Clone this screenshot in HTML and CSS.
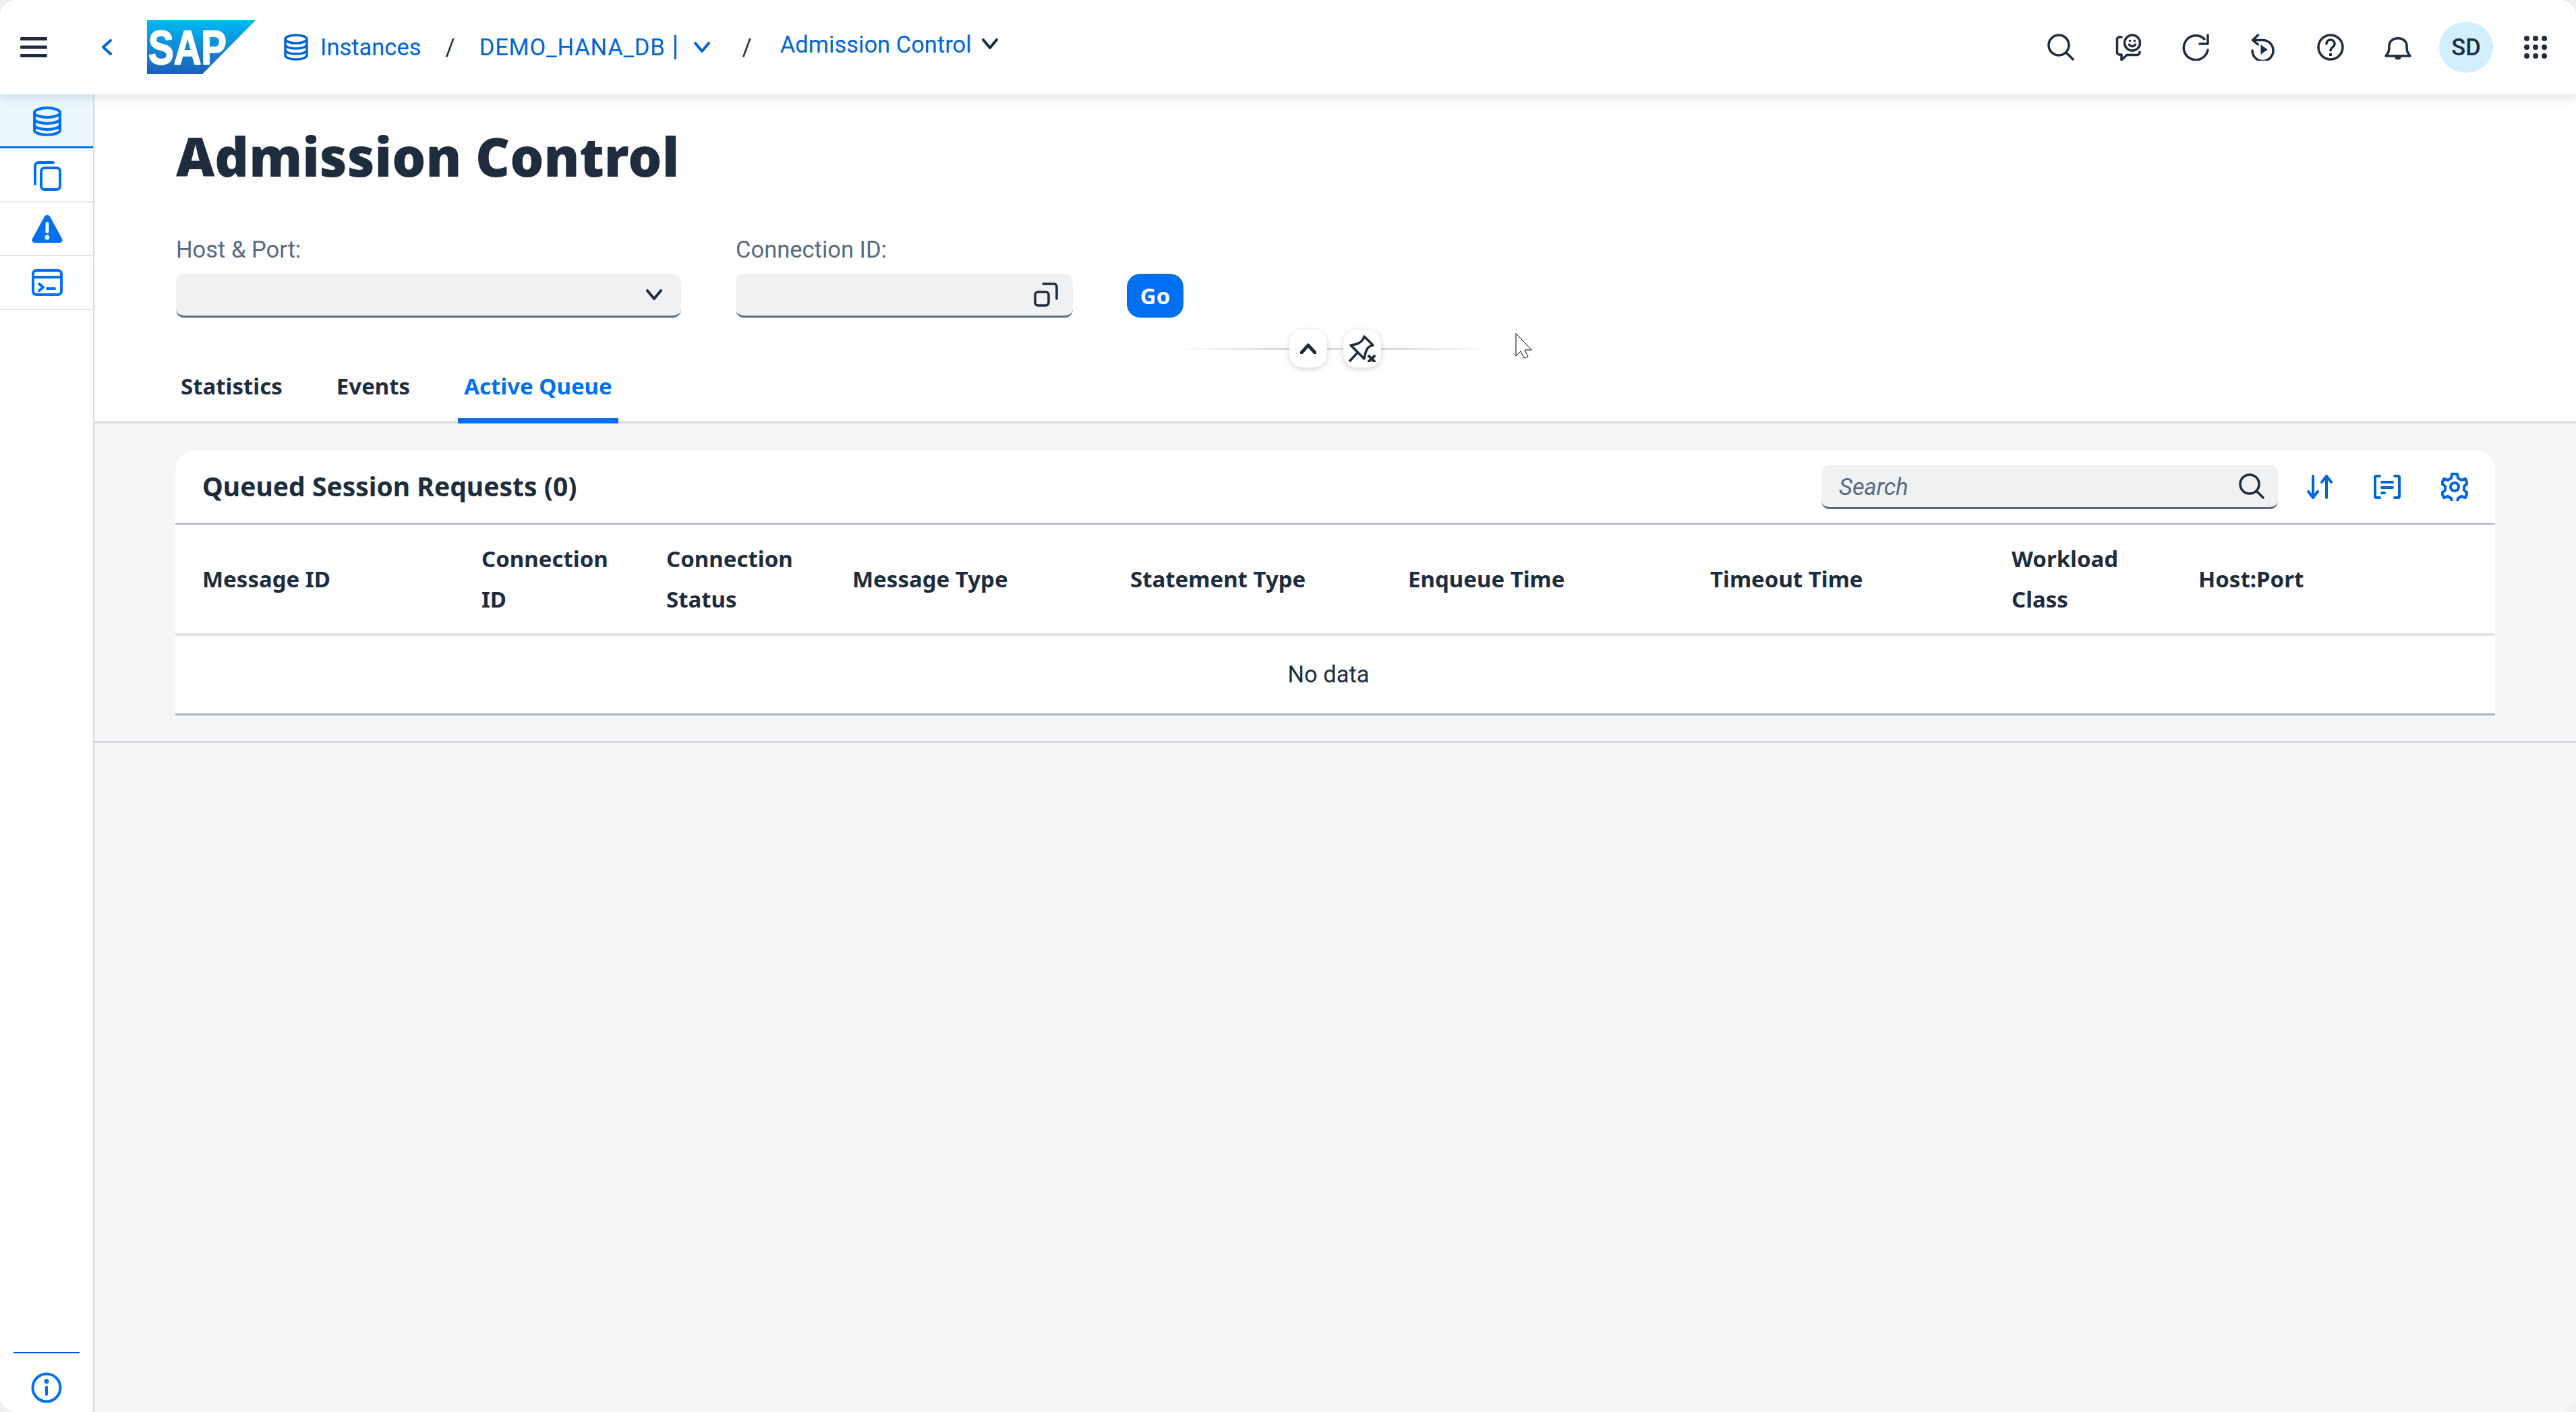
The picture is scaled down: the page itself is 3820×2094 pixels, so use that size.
FILE: index.html
```html
<!DOCTYPE html>
<html lang="en">

<head>
  <meta charset="UTF-8">
  <title>Admission Control</title>
  <link rel="stylesheet" href="styles.css">
</head>

<body>
  <div class="window">
    <div class="topbar">
      <div class="topbar-left">
        <svg class="icon-menu" viewBox="0 0 40 30"><path d="M2 2.500h36M2 15h36M2 27.500h36"/></svg>
        <svg class="icon-back" viewBox="0 0 16 24"><path d="M14 2 3 12l11 10"/></svg>
        <svg class="logo" viewBox="0 0 161 80">
          <defs>
            <linearGradient id="logo-fill" x1="0" y1="0" x2="0" y2="1">
              <stop offset="0" stop-color="#00b8f1"/>
              <stop offset="1" stop-color="#1e5fbb"/>
            </linearGradient>
          </defs>
          <polygon points="0,0 161,0 82,80 0,80" fill="url(#logo-fill)"/>
          <text class="logo-text" x="2" y="65" textLength="116" lengthAdjust="spacingAndGlyphs">SAP</text>
        </svg>
        <a class="crumb crumb-first">
          <svg class="icon-db" viewBox="0 0 36 40"><ellipse cx="18" cy="8" rx="16" ry="6"/><path d="M2 8v24c0 3.500 7 6 16 6s16-2.500 16-6V8M2 16c0 3.500 7 6 16 6s16-2.500 16-6M2 24c0 3.500 7 6 16 6s16-2.500 16-6"/></svg>
          Instances
        </a>
        <span class="slash">/</span>
        <a class="crumb crumb-db">DEMO_HANA_DB</a>
        <span class="caret"></span>
        <svg class="chev chev-blue" viewBox="0 0 24 16"><path d="M2 2l10 12L22 2"/></svg>
        <span class="slash slash-second">/</span>
        <a class="crumb crumb-last">Admission Control</a>
        <svg class="chev chev-dark" viewBox="0 0 24 16"><path d="M2 2l10 12L22 2"/></svg>
      </div>
      <div class="topbar-right">
        <svg class="tool" viewBox="0 0 40 40"><circle cx="17" cy="17" r="15"/><path d="m28 28 10 10"/></svg>
        <svg class="tool" viewBox="0 0 40 40"><path d="M10 5H6.500a3 3 0 0 0-3 3v20a3 3 0 0 0 3 3H10v8l8-7.500h15a4 4 0 0 0 4-4.500"/><circle cx="26" cy="13.500" r="11.500"/><path d="M21.500 16c2 3.500 7 3.500 9 0"/><circle class="dot" cx="22.500" cy="10.500" r="1.800"/><circle class="dot" cx="29.500" cy="10.500" r="1.800"/></svg>
        <svg class="tool" viewBox="0 0 40 40"><path d="M33 8A18 18 0 1 0 38 24"/><path d="M38 2v13H26"/></svg>
        <svg class="tool" viewBox="0 0 40 40"><path d="M12.500 2 4.500 9.500l8 6.500"/><path d="M5 9.500h14A15.500 15.500 0 1 1 4 25"/><path class="dot" d="m16.500 16 10 7.500-10 7.500z"/></svg>
        <svg class="tool" viewBox="0 0 40 40"><circle cx="20" cy="20" r="18"/><path d="M14 15c0-8 12-8 12 0 0 5-6 5-6 10"/><path class="dot" d="M18 29h4v4h-4z"/></svg>
        <svg class="tool" viewBox="0 0 40 40"><path d="M2 33c4-5 5-7 5-15C7 3 33 3 33 18c0 8 1 10 5 15z"/><path class="dot" d="M15 34h10c0 6-10 6-10 0z"/></svg>
        <span class="avatar">SD</span>
        <svg class="grid-icon" viewBox="0 0 36 36"><circle cx="5" cy="5" r="4"/><circle cx="18" cy="5" r="4"/><circle cx="31" cy="5" r="4"/><circle cx="5" cy="18" r="4"/><circle cx="18" cy="18" r="4"/><circle cx="31" cy="18" r="4"/><circle cx="5" cy="31" r="4"/><circle cx="18" cy="31" r="4"/><circle cx="31" cy="31" r="4"/></svg>
      </div>
    </div>

    <div class="layout">
      <div class="sidebar">
        <div class="side-item active">
          <svg class="side-icon" viewBox="0 0 42 44"><ellipse cx="21" cy="9" rx="19" ry="7"/><path d="M2 9v26c0 4 8.500 7 19 7s19-3 19-7V9M2 18c0 4 8.500 7 19 7s19-3 19-7M2 27c0 4 8.500 7 19 7s19-3 19-7"/></svg>
        </div>
        <div class="side-item copies">
          <svg class="side-icon" viewBox="0 0 42 44"><rect x="12" y="10" width="28" height="32" rx="5"/><path d="M3 34V7a5 5 0 0 1 5-5h22"/></svg>
        </div>
        <div class="side-item">
          <svg class="side-icon" viewBox="0 0 46 42"><path class="fill" d="M19 3c2-3 6-3 8 0l18 33c1.500 3 0 6-3 6H4c-3 0-4.500-3-3-6z"/><rect class="cut" x="20.500" y="11" width="5" height="17" rx="2.500"/><circle class="cut" cx="23" cy="34" r="3.500"/></svg>
        </div>
        <div class="side-item">
          <svg class="side-icon" viewBox="0 0 46 40"><rect x="2" y="2" width="42" height="36" rx="5"/><path d="M2 12h42M11 22l6 5-6 5M23 29h11"/></svg>
        </div>
        <div class="side-bottom">
          <div class="side-rule"></div>
          <svg class="side-info" viewBox="0 0 46 46"><circle cx="23" cy="23" r="20.500"/><path d="M23 22v11"/><circle class="fill" cx="23" cy="13.500" r="3.500"/></svg>
        </div>
      </div>

      <div class="main">
        <div class="page-header">
          <h1 class="title">Admission Control</h1>
          <div class="filters">
            <div class="field field-host">
              <label>Host &amp; Port:</label>
              <div class="input">
                <svg class="chev chev-dark" viewBox="0 0 24 16"><path d="M2 2l10 12L22 2"/></svg>
              </div>
            </div>
            <div class="field field-conn">
              <label>Connection ID:</label>
              <div class="input">
                <svg class="tool-small" viewBox="0 0 36 36"><rect x="2" y="14" width="20" height="20" rx="4"/><path d="M14 2h16a4 4 0 0 1 4 4v18"/></svg>
              </div>
            </div>
            <button class="go">Go</button>
          </div>
          <div class="collapse-row">
            <div class="collapse-line">
              <button class="round-btn"><svg class="tiny-chev" viewBox="0 0 24 16"><path d="M2 14 12 3l10 11"/></svg></button>
              <button class="round-btn"><svg class="pin" viewBox="0 0 40 40"><path d="M23 2 36 15c-6 1-10 3-13 20L3 15c8-1 17-3 20-13zM13 26 2 38"/><path class="pin-x" d="M30 31l8 8M38 31l-8 8"/></svg></button>
            </div>
          </div>
          <div class="tabs">
            <a class="tab">Statistics</a>
            <a class="tab">Events</a>
            <a class="tab tab-active">Active Queue</a>
          </div>
        </div>

        <div class="content">
          <div class="card">
            <div class="card-head">
              <h2 class="card-title">Queued Session Requests (0)</h2>
              <div class="search">
                <span class="search-text">Search</span>
                <svg class="search-icon" viewBox="0 0 38 38"><circle cx="16" cy="16" r="14"/><path d="m26 26 10 10"/></svg>
              </div>
              <svg class="act" viewBox="0 0 38 36"><path d="M9 2v31M2 25l7 9 7-9M29 34V3M22 11l7-9 7 9"/></svg>
              <svg class="act" viewBox="0 0 40 36"><path d="M9 2H4a2 2 0 0 0-2 2v28a2 2 0 0 0 2 2h5M31 2h5a2 2 0 0 1 2 2v28a2 2 0 0 1-2 2h-5M12 11h16M12 19h16M12 27h4"/></svg>
              <svg class="act gear" viewBox="0 0 38 42"><path d="M15 2h8l1 6 5 3 6-2 3 7-5 4v6l5 4-3 7-6-2-5 3-1 6h-8l-1-6-5-3-6 2-3-7 5-4v-6l-5-4 3-7 6 2 5-3z"/><circle cx="19" cy="21" r="6"/></svg>
            </div>
            <table class="table">
              <colgroup>
                <col class="c-first"><col class="c-conn"><col class="c-status"><col class="c-wide"><col class="c-wide"><col class="c-enqueue"><col class="c-timeout"><col class="c-class"><col>
              </colgroup>
              <thead>
                <tr>
                  <th>Message ID</th>
                  <th>Connection ID</th>
                  <th>Connection Status</th>
                  <th>Message Type</th>
                  <th>Statement Type</th>
                  <th>Enqueue Time</th>
                  <th>Timeout Time</th>
                  <th>Workload Class</th>
                  <th>Host:Port</th>
                </tr>
              </thead>
              <tbody>
                <tr>
                  <td colspan="9">No data</td>
                </tr>
              </tbody>
            </table>
          </div>
        </div>
      </div>
    </div>

    <svg class="cursor" viewBox="0 0 25 38"><path d="M1 1v33l7-7 5 10 6-2-5-10h10z"/></svg>
  </div>
</body>

</html>
```

FILE: styles.css
```css
* {
  box-sizing: border-box;
}

html,
body {
  margin: 0;
  height: 100%;
  background: #eef0f1;
}

body {
  font-family: Roboto, "Noto Sans", sans-serif;
  font-size: 34.5px;
  color: #1d2d3e;
}

svg {
  display: block;
  flex: none;
  fill: none;
  stroke-linecap: round;
  stroke-linejoin: round;
}

.window {
  position: relative;
  height: 2094px;
  overflow: hidden;
  border-radius: 24px;
  background: #f5f6f7;
  display: flex;
  flex-direction: column;
}

.topbar {
  position: relative;
  z-index: 2;
  flex: none;
  display: flex;
  align-items: center;
  justify-content: space-between;
  height: 140px;
  background: #fff;
  box-shadow: 0 4px 14px rgba(85, 107, 130, .22);
}

.topbar-left {
  display: flex;
  align-items: center;
  padding-left: 30px;
}

.icon-menu {
  width: 40px;
  height: 30px;
  stroke: #1d2d3e;
  stroke-width: 5;
}

.icon-back {
  width: 16px;
  height: 24px;
  margin-left: 80px;
  stroke: #0064d9;
  stroke-width: 4;
}

.logo {
  width: 161px;
  height: 80px;
  margin-left: 52px;
}

.logo-text {
  font-family: "Liberation Sans", sans-serif;
  font-weight: 700;
  font-size: 70px;
  fill: #fff;
  stroke: #fff;
  stroke-width: 2;
}

.crumb {
  display: flex;
  align-items: center;
  color: #0064d9;
  white-space: nowrap;
}

.crumb-first {
  margin-left: 42px;
}

.crumb-db {
  letter-spacing: .8px;
}

.icon-db {
  width: 36px;
  height: 40px;
  margin-right: 18px;
  stroke: #0064d9;
  stroke-width: 3.500;
}

.slash {
  margin: 0 36px;
}

.caret {
  width: 3px;
  height: 36px;
  margin-left: 13px;
  background: #0064d9;
}

.chev {
  width: 24px;
  height: 16px;
  stroke-width: 4;
}

.chev-blue {
  margin-left: 26px;
  stroke: #0064d9;
}

.chev-dark {
  stroke: #1d2d3e;
}

.slash-second {
  margin: 0 42px 0 48px;
}

.crumb-last {
  margin-top: -8px;
}

.crumb-last + .chev {
  margin: -10px 0 0 15px;
}

.topbar-right {
  display: flex;
  align-items: center;
  gap: 60px;
  padding-right: 42px;
}

.tool {
  width: 40px;
  height: 40px;
  stroke: #1d2d3e;
  stroke-width: 3.500;
}

.tool .dot {
  fill: #1d2d3e;
  stroke: none;
}

.avatar {
  display: flex;
  align-items: center;
  justify-content: center;
  width: 80px;
  height: 76px;
  margin: 0 -15px 0 -19px;
  border-radius: 50%;
  background: #d1efff;
  font-weight: 500;
}

.grid-icon {
  width: 36px;
  height: 36px;
  fill: #1d2d3e;
}

.layout {
  flex: 1;
  display: flex;
  min-height: 0;
}

.sidebar {
  flex: none;
  display: flex;
  flex-direction: column;
  width: 140px;
  background: #fff;
  border-right: 2px solid #d9d9d9;
}

.side-item {
  display: flex;
  align-items: center;
  justify-content: center;
  height: 80px;
  padding-left: 2px;
  border-bottom: 2px solid #e5e5e5;
}

.side-item.copies {
  padding-top: 3px;
}

.side-item.active {
  padding-top: 3px;
  background: #ebf8ff;
  border-bottom: 3px solid #0070f2;
}

.side-icon {
  width: 46px;
  height: 44px;
  stroke: #0070f2;
  stroke-width: 4;
}

.side-icon .fill {
  fill: #0070f2;
  stroke: none;
}

.side-icon .cut {
  fill: #fff;
  stroke: none;
}

.side-bottom {
  margin-top: auto;
  padding: 0 20px 13px;
}

.side-rule {
  height: 2px;
  margin-bottom: 28px;
  background: #0057d2;
}

.side-info {
  width: 46px;
  height: 46px;
  margin: 0 auto;
  stroke: #0070f2;
  stroke-width: 4;
}

.side-info .fill {
  fill: #0070f2;
  stroke: none;
}

.main {
  flex: 1;
  min-width: 0;
  display: flex;
  flex-direction: column;
}

.page-header {
  flex: none;
  display: flex;
  flex-direction: column;
  height: 488px;
  padding: 47px 0 0 121px;
  background: #fff;
  border-bottom: 3px solid #d9dbde;
}

.title {
  margin: 0;
  font-family: "Noto Sans", sans-serif;
  font-size: 79px;
  font-weight: 900;
  line-height: 90px;
}

.filters {
  display: flex;
  align-items: flex-end;
  margin-top: 70px;
}

.field label {
  display: block;
  margin-bottom: 13px;
  line-height: 46px;
  color: #556b82;
}

.field-host {
  width: 749px;
}

.field-conn {
  width: 500px;
  margin-left: 81px;
}

.input {
  display: flex;
  align-items: center;
  justify-content: flex-end;
  height: 65px;
  padding-right: 28px;
  background: #eff1f2;
  border-bottom: 3px solid #556b82;
  border-radius: 12px;
}

.field-conn .input {
  padding-right: 22px;
}

.tool-small {
  width: 36px;
  height: 36px;
  stroke: #1d2d3e;
  stroke-width: 3.500;
}

.go {
  width: 84px;
  height: 65px;
  margin-left: 80px;
  padding: 0;
  border: 0;
  border-radius: 20px;
  background: #0070f2;
  color: #fff;
  font: 700 33px "Noto Sans", sans-serif;
}

.collapse-row {
  margin: 18px 0 0 1487px;
  width: 464px;
}

.collapse-line {
  display: flex;
  justify-content: center;
  gap: 24px;
  background: linear-gradient(to right, rgba(217, 219, 222, 0), #d9dbde 30%, #d9dbde 70%, rgba(217, 219, 222, 0)) center / 100% 3px no-repeat;
}

.round-btn {
  display: flex;
  align-items: center;
  justify-content: center;
  width: 56px;
  height: 56px;
  padding: 0;
  border: 0;
  border-radius: 20px;
  background: #fff;
  box-shadow: 0 2px 8px rgba(85, 107, 130, .3);
}

.tiny-chev {
  width: 24px;
  height: 16px;
  stroke: #1d2d3e;
  stroke-width: 5;
}

.pin {
  width: 40px;
  height: 40px;
  stroke: #1d2d3e;
  stroke-width: 3.500;
}

.pin-x {
  stroke-width: 4;
}

.tabs {
  display: flex;
  gap: 62px;
  margin: auto 0 -3px -2px;
}

.tab {
  padding: 0 9px 24px;
  line-height: 46px;
  font-family: "Noto Sans", sans-serif;
  font-size: 33px;
  font-weight: 700;
  border-bottom: 8px solid transparent;
}

.tab-active {
  color: #0070f2;
  border-bottom-color: #0070f2;
  border-radius: 8px 8px 0 0;
}

.content {
  padding: 40px 120px 0;
  height: 474px;
  flex: none;
  border-bottom: 3px solid #d9dbde;
}

.card {
  background: #fff;
  border-radius: 30px 30px 0 0;
}

.card-head {
  display: flex;
  align-items: center;
  height: 108px;
  padding: 0 40px;
}

.card-title {
  flex: 1;
  margin: 0;
  padding-bottom: 3px;
  font-family: "Noto Sans", sans-serif;
  font-size: 39px;
  font-weight: 700;
}

.search {
  display: flex;
  align-items: center;
  justify-content: space-between;
  width: 677px;
  height: 65px;
  padding: 0 20px 0 26px;
  margin-right: 42px;
  background: #eff1f2;
  border-bottom: 3px solid #556b82;
  border-radius: 12px;
}

.search-text {
  padding-top: 2px;
  font-style: italic;
  color: #556b82;
}

.search-icon {
  width: 38px;
  height: 38px;
  stroke: #1d2d3e;
  stroke-width: 3.500;
}

.act {
  width: 40px;
  height: 36px;
  margin-right: 60px;
  stroke: #0064d9;
  stroke-width: 4;
}

.gear {
  height: 42px;
  margin-right: 0;
}

.table {
  width: 100%;
  table-layout: fixed;
  border-collapse: collapse;
}

.c-first {
  width: 414px;
}

.c-conn {
  width: 274px;
}

.c-status {
  width: 276px;
}

.c-wide {
  width: 412px;
}

.c-enqueue {
  width: 448px;
}

.c-timeout {
  width: 447px;
}

.c-class {
  width: 277px;
}

.table th {
  padding: 0 40px;
  height: 164px;
  line-height: 60px;
  text-align: left;
  font-family: "Noto Sans", sans-serif;
  font-size: 33px;
  font-weight: 700;
  border-top: 2px solid #a8b2bd;
  border-bottom: 4px solid #e5e5e5;
}

.table td {
  height: 118px;
  padding: 0 20px 0 0;
  text-align: center;
  border-bottom: 3px solid #a8b2bd;
}

.cursor {
  position: absolute;
  left: 2247px;
  top: 494px;
  z-index: 3;
  width: 25px;
  height: 38px;
  fill: #fff;
  stroke: #000;
  stroke-width: 1;
}
```
